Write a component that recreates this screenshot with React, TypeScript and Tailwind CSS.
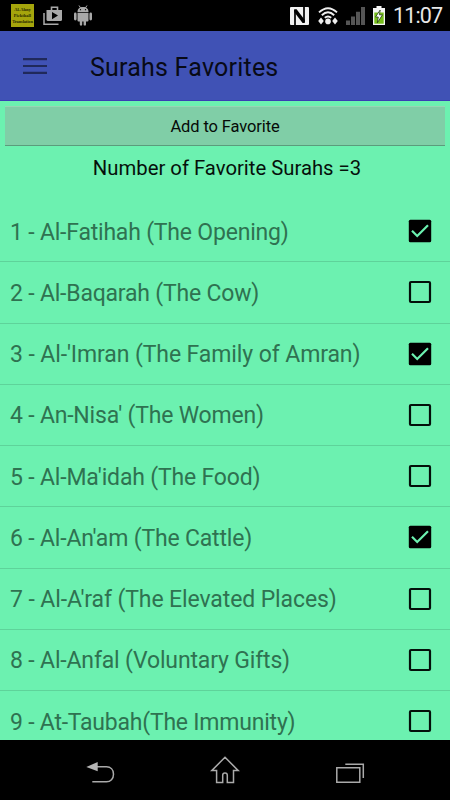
const surahs = [
  { name: "1 - Al-Fatihah (The Opening)", checked: true, tracking: "tracking-[-0.2px]" },
  { name: "2 - Al-Baqarah (The Cow)", checked: false, tracking: "tracking-[-0.2px]" },
  { name: "3 - Al-'Imran (The Family of Amran)", checked: true, tracking: "tracking-[-0.1px]" },
  { name: "4 - An-Nisa' (The Women)", checked: false, tracking: "tracking-[-0.2px]" },
  { name: "5 - Al-Ma'idah (The Food)", checked: false, tracking: "tracking-[-0.18px]" },
  { name: "6 - Al-An'am (The Cattle)", checked: true, tracking: "tracking-[-0.18px]" },
  { name: "7 - Al-A'raf (The Elevated Places)", checked: false, tracking: "tracking-[-0.11px]" },
  { name: "8 - Al-Anfal (Voluntary Gifts)", checked: false, tracking: "tracking-[-0.16px]" },
  { name: "9 - At-Taubah(The Immunity)", checked: false, tracking: "tracking-[-0.22px]" },
];

export default function App() {
  return (
    <div className="flex h-[800px] w-[450px] flex-col overflow-hidden bg-[#6cf1b0] font-[Roboto,sans-serif]">
      <StatusBar />
      <header className="flex h-[70px] shrink-0 items-center border-b border-[#3a3fb4] bg-[#4052b5] pl-[23px]">
        <svg className="h-[18px] w-6" viewBox="0 0 24 18" fill="#20295b">
          <path d="M0 1h24v2.2H0zM0 7.9h24v2.2H0zM0 14.8h24V17H0z" />
        </svg>
        <h1 className="ml-[43px] pt-[4px] text-[25px] leading-[30px] tracking-[0.22px] text-[#080a16]">
          Surahs Favorites
        </h1>
      </header>
      <button className="mx-[5px] mt-[5px] h-[40px] shrink-0 border-t border-b border-t-[#98d6b4] border-b-[#5b9c7c] bg-[#80cea7] pt-[3px] text-[16.5px] tracking-[-0.12px] text-[#060b08]">
        Add to Favorite
      </button>
      <p className="mt-[8px] h-[47px] shrink-0 pl-1 text-center text-[20.3px] leading-7 text-[#06100b]">
        Number of Favorite Surahs =3
      </p>
      <ul className="min-h-0 flex-1 overflow-hidden">
        {surahs.map((surah) => (
          <li
            key={surah.name}
            className="flex h-[61.25px] items-center justify-between border-b border-[#5ed39a] pr-[18px] pl-2.5"
          >
            <span className={`pt-[3px] text-[23px] leading-7 whitespace-nowrap text-[#2f7251] ${surah.tracking}`}>
              {surah.name}
            </span>
            <Checkbox checked={surah.checked} />
          </li>
        ))}
      </ul>
      <NavBar />
    </div>
  );
}

function Checkbox({ checked }: { checked: boolean }) {
  return (
    <svg className="h-6 w-6" viewBox="0 0 24 24" fill="none">
      {checked ? (
        <>
          <rect x="0.8" y="0.8" width="22.4" height="22.4" rx="1.5" fill="#000" />
          <path d="M4 11.8l5.2 5.2L20 6.2" stroke="#6cf1b0" strokeWidth="2.2" />
        </>
      ) : (
        <rect x="2" y="2" width="20" height="20" rx="1" stroke="#03100a" strokeWidth="2.2" />
      )}
    </svg>
  );
}

function StatusBar() {
  return (
    <div className="flex h-[31px] shrink-0 items-center bg-black">
      <div className="ml-[11px] flex h-[23px] w-[23px] flex-col items-center justify-center overflow-hidden bg-[#a5a50c] font-['Liberation_Serif',serif] text-[4.5px] leading-[6px] font-bold text-[#292900]">
        <span>Al-Ahny</span>
        <span>Pickthall</span>
        <span className="tracking-[-0.15px]">Translation</span>
      </div>
      <svg className="ml-[9px] h-5 w-5" viewBox="0 0 20 20" fill="none">
        <path d="M1 7v11.2h14.5" stroke="#a9a9a9" strokeWidth="1.5" />
        <path d="M8.5 4V1.3h6V4" stroke="#a9a9a9" strokeWidth="1.6" />
        <path d="M3.5 4H19v9.5q0 1.5-1.5 1.5H5q-1.5 0-1.5-1.5z" fill="#a9a9a9" />
        <path d="M9 6l6 3.6-6 3.6z" fill="#000" />
      </svg>
      <svg className="ml-[11px] h-[21px] w-[18px]" viewBox="0 0 18 21" fill="#a9a9a9">
        <path d="M3.5 7C3.5 4 5.3 2 9 2s5.5 2 5.5 5z" />
        <path d="M5 .5l1.5 2.3M13 .5l-1.5 2.3" stroke="#a9a9a9" />
        <path d="M3.5 7.7h11v7.7q0 1-1 1H12v3q0 1.2-1.2 1.2t-1.2-1.2v-3H8.2v3Q8.2 20.6 7 20.6t-1.2-1.2v-3H4.5q-1 0-1-1z" />
        <rect y="7.6" width="2.6" height="7.8" rx="1.3" />
        <rect x="15.4" y="7.6" width="2.6" height="7.8" rx="1.3" />
        <circle cx="6.5" cy="4.7" r=".65" fill="#000" />
        <circle cx="11.5" cy="4.7" r=".65" fill="#000" />
      </svg>
      <svg className="ml-[198px] h-[18px] w-[19px]" viewBox="0 0 19 18" fill="none">
        <rect width="19" height="18" rx="1" fill="#f1f1f1" />
        <path d="M5 18V3M14 0v15" stroke="#000" strokeWidth="1.7" />
        <path d="M4.2 2.2h2.4L14.8 13v3h-2.2L4.2 5z" fill="#000" />
      </svg>
      <svg className="ml-[9px] h-[18px] w-5" viewBox="0 0 20 18" fill="none" stroke="#eee" strokeWidth="1.9">
        <path d="M1 5.4Q10-3 19 5.4M3.8 8.2q6.2-5.8 12.4 0M6.8 10.8q3.2-2.6 6.4 0" />
        <circle cx="10" cy="14.4" r="2.8" fill="#eee" stroke="none" />
        <path d="M3 10.4l2.8 3.6L3 17.6.2 14zM17 10.4l2.8 3.6-2.8 3.6-2.8-3.6z" fill="#eee" stroke="none" />
      </svg>
      <svg className="ml-[8px] h-[18px] w-[19px]" viewBox="0 0 19 18" fill="#555">
        <path d="M0 13.5h4V18H0zM5 9.5h4V18H5zM10 4.8h4V18h-4zM15 0h4v18h-4z" />
      </svg>
      <svg className="ml-[8px] h-[19px] w-3" viewBox="0 0 12 19">
        <path d="M3.5 0h5v2H12v17H0V2h3.5z" fill="#f5f5f5" />
        <path d="M1.3 6.5h9.4v11.2H1.3z" fill="#75bd19" />
        <path d="M7.2 4L2.5 11h2.8l-1 5.8 5.2-8H6.4z" fill="#fff" stroke="#263d12" strokeWidth=".8" />
      </svg>
      <span className="ml-[8px] pt-px text-[21.5px] leading-6 tracking-[-0.85px] text-[#e8e8e8]">11:07</span>
    </div>
  );
}

function NavBar() {
  return (
    <nav className="flex h-[60px] shrink-0 items-center justify-between bg-black px-[85px]">
      <svg className="h-[30px] w-[30px]" viewBox="0 0 30 30" fill="none" stroke="#aaa" strokeWidth="1.5">
        <path d="M11 11.8h10.5c4 0 7 2.8 7 7.4s-3 7.6-7 7.6H7.3" />
        <path d="M1.3 12L12.7 7v9.2z" fill="#b5b5b5" stroke="none" />
      </svg>
      <svg className="h-[30px] w-[30px]" viewBox="0 0 30 30" fill="none" stroke="#aaa" strokeWidth="1.5">
        <path d="M15 2.3L28.3 15.6h-4.8v12h-6.2v-7.3q0-2.2-2.3-2.2t-2.3 2.2v7.3H6.6v-12H1.7z" />
      </svg>
      <svg className="h-[30px] w-[30px]" viewBox="0 0 30 30" fill="none" stroke="#aaa" strokeWidth="1.5">
        <path d="M1.8 12.8h23v14.4h-23zM10.3 9.2h18V23" />
      </svg>
    </nav>
  );
}
